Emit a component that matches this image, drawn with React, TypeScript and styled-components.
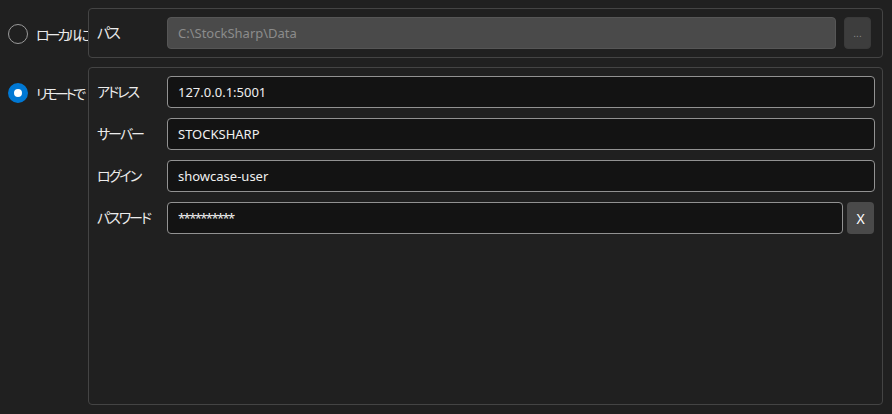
import React, { useState } from 'react'
import styled, { createGlobalStyle } from 'styled-components'

const GlobalStyle = createGlobalStyle`
	html, body, #root {
		margin: 0;
		height: 100%;
	}
	body {
		background: #202020;
		color: #ececec;
		font-family: 'Noto Sans', 'Noto Sans CJK JP', sans-serif;
		font-size: 14px;
		font-feature-settings: 'palt';
	}
`

type Mode = 'local' | 'remote'

export default function App() {
	const [mode, setMode] = useState<Mode>('remote')

	return (
		<>
			<GlobalStyle />
			<Page>
				<Side>
					<Radio onClick={() => setMode('local')}>
						<Dot checked={mode === 'local'} />
						<RadioText>ローカルに</RadioText>
					</Radio>
				</Side>
				<GroupBox>
					<FieldRow>
						<Label>パス</Label>
						<Field disabled value="C:\StockSharp\Data" readOnly />
						<BrowseButton>...</BrowseButton>
					</FieldRow>
				</GroupBox>

				<Side>
					<Radio onClick={() => setMode('remote')}>
						<Dot checked={mode === 'remote'} />
						<RadioText>リモートで</RadioText>
					</Radio>
				</Side>
				<GroupBox>
					<FieldList>
						<FieldRow>
							<Label>アドレス</Label>
							<Field defaultValue="127.0.0.1:5001" />
						</FieldRow>
						<FieldRow>
							<Label>サーバー</Label>
							<Field defaultValue="STOCKSHARP" />
						</FieldRow>
						<FieldRow>
							<Label>ログイン</Label>
							<Field defaultValue="showcase-user" />
						</FieldRow>
						<FieldRow>
							<Label>パスワード</Label>
							<Field secret defaultValue="**********" />
							<ClearButton>X</ClearButton>
						</FieldRow>
					</FieldList>
				</GroupBox>
			</Page>
		</>
	)
}

const Page = styled.div`
	height: 100%;
	box-sizing: border-box;
	padding: 8px 9px 9px 0;
	display: grid;
	grid-template-columns: 88px 1fr;
	grid-template-rows: auto 1fr;
	row-gap: 9px;
`

const Side = styled.div`
	overflow: hidden;
	padding: 9px 0 0 8px;
`

const Radio = styled.div`
	height: 34px;
	display: flex;
	align-items: center;
	gap: 8px;
	white-space: nowrap;
	cursor: pointer;
`

const RadioText = styled.span`
	letter-spacing: -3px;
`

const Dot = styled.div<{ checked: boolean }>`
	flex: none;
	width: 20px;
	height: 20px;
	box-sizing: border-box;
	border-radius: 50%;
	border: ${(p) => (p.checked ? '6px solid #0078d4' : '1px solid #9a9a9a')};
	background: ${(p) => (p.checked ? '#ffffff' : 'transparent')};
`

const GroupBox = styled.div`
	border: 1px solid #444444;
	border-radius: 4px;
	padding: 8px 7px 8px 8px;
	min-height: 0;
`

const FieldList = styled.div`
	display: flex;
	flex-direction: column;
	gap: 10px;
`

const FieldRow = styled.div`
	display: flex;
	align-items: center;
	gap: 4px;
`

const Label = styled.div`
	flex: none;
	width: 66px;
	padding-bottom: 2px;
	letter-spacing: -2px;
	white-space: nowrap;
`

const Field = styled.input<{ secret?: boolean }>`
	flex: 1;
	min-width: 0;
	height: 32px;
	box-sizing: border-box;
	padding: 0 10px;
	border-radius: 4px;
	border: 1px solid #929292;
	background: #131313;
	color: #f0f0f0;
	font-family: 'Noto Sans', 'Noto Sans CJK JP', sans-serif;
	font-size: 13px;
	letter-spacing: ${(p) => (p.secret ? '-1.6px' : 'normal')};
	outline: none;

	&:disabled {
		background: #4a4a4a;
		border-color: #565656;
		color: #8c8c8c;
	}
`

const BrowseButton = styled.button`
	flex: none;
	width: 27px;
	height: 32px;
	margin: 0 4px;
	border: 1px solid #3a3a3a;
	border-radius: 4px;
	background: #3d3d3d;
	color: #8a8a8a;
	font-size: 10px;
	padding: 0;
`

const ClearButton = styled.button`
	flex: none;
	width: 27px;
	height: 32px;
	margin-right: 1px;
	border: none;
	border-radius: 4px;
	background: #4a4a4a;
	color: #ffffff;
	font-family: 'Noto Sans', sans-serif;
	font-size: 14px;
	padding: 0;
`
